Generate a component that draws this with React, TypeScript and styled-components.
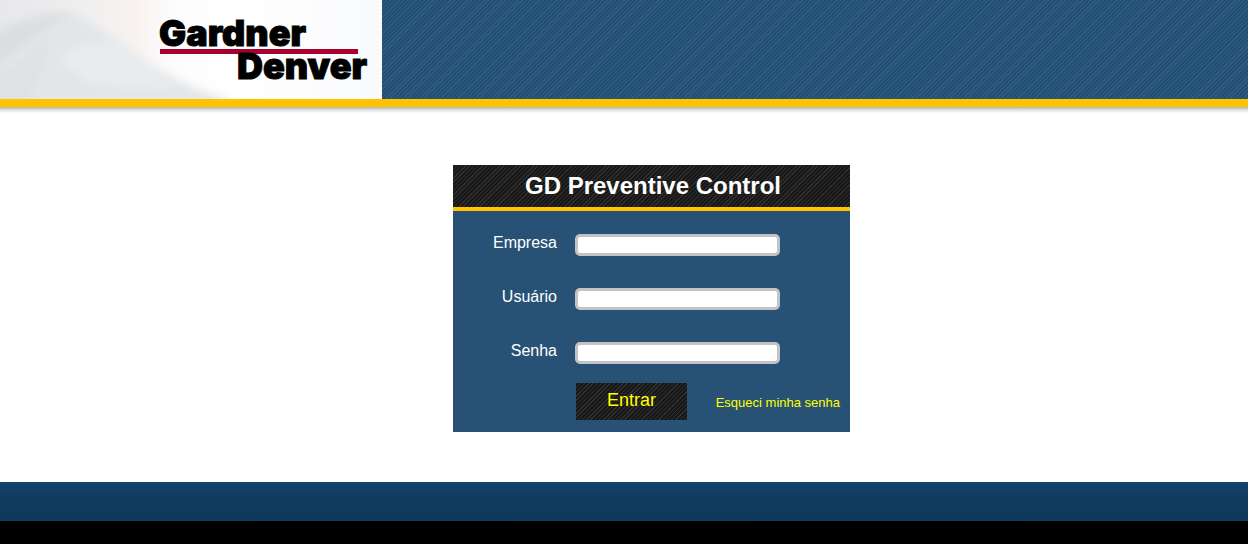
import React from "react";
import styled, { createGlobalStyle, css } from "styled-components";

const GlobalStyle = createGlobalStyle`
  *, *::before, *::after { box-sizing: border-box; }
  body {
    margin: 0;
    background: #000;
    font-family: "Liberation Sans", Arial, sans-serif;
  }
`;

const hatch = (base: string, line: string) => css`
  background-color: ${base};
  background-image: repeating-linear-gradient(
    135deg,
    ${line} 0,
    ${line} 1px,
    transparent 1px,
    transparent 3px
  );
`;

const Page = styled.div`
  display: flex;
  flex-direction: column;
  min-height: 100vh;
  background: #fff;
`;

const Header = styled.header`
  position: relative;
  display: flex;
  border-bottom: 8px solid #ffc300;
  ${hatch("#225074", "#325d80")}
  background-clip: padding-box;

  &::after {
    content: "";
    position: absolute;
    top: calc(100% + 8px);
    left: 0;
    right: 0;
    height: 6px;
    background: linear-gradient(#b4b4b4, #e2e2e2 50%, #fff);
  }
`;

const Brand = styled.a`
  display: block;
  flex: none;
  height: 99px;
`;

const Main = styled.main`
  flex: 1;
  display: flex;
  justify-content: center;
  align-items: flex-start;
  padding: 58px 0 50px 55px;
`;

const Panel = styled.form`
  width: 397px;
  background: #275275;
`;

const Title = styled.h1`
  margin: 0;
  padding-left: 3px;
  border-bottom: 4px solid #ffc300;
  ${hatch("#181818", "#2e2e2e")}
  background-clip: padding-box;
  color: #fff;
  font-size: 24px;
  line-height: 42px;
  text-align: center;
`;

const Fields = styled.div`
  display: grid;
  gap: 32px;
  padding-top: 23px;
`;

const Field = styled.div`
  display: grid;
  grid-template-columns: 104px 205px;
  column-gap: 18px;
`;

const Label = styled.label`
  color: #fff;
  font-size: 16px;
  line-height: 18px;
  text-align: right;
`;

const TextInput = styled.input`
  width: 100%;
  height: 22px;
  padding: 0 4px;
  border: 3px solid #c3c3c3;
  border-radius: 5px;
  outline: none;
  background: #fff;
  font: 13px "Liberation Sans", Arial, sans-serif;
`;

const Actions = styled.div`
  display: flex;
  align-items: center;
  justify-content: space-between;
  padding: 19px 10px 12px 123px;
`;

const Submit = styled.button`
  width: 111px;
  height: 37px;
  padding: 0 0 3px;
  border: 0;
  ${hatch("#181818", "#303030")}
  color: #ffff00;
  font: 18px "Liberation Sans", Arial, sans-serif;
  cursor: pointer;
`;

const Forgot = styled.a`
  padding-top: 2px;
  color: #ffff00;
  font-size: 13px;
  text-decoration: none;
`;

const Footer = styled.footer`
  height: 62px;
  border-bottom: 23px solid #000;
  background: linear-gradient(#12416a, #103b5f 50%, #10395b);
`;

const LogoText = styled.text`
  font: 900 36px Inter, "Liberation Sans", sans-serif;
  fill: #000;
  stroke: #000;
  stroke-width: 1px;
`;

const Logo = () => (
  <svg width="382" height="99" viewBox="0 0 382 99" role="img" aria-label="Gardner Denver" display="block">
    <defs>
      <linearGradient id="backdrop" x1="0" x2="1" y1="0" y2="0">
        <stop offset="0" stopColor="#e8e8ea" />
        <stop offset="0.2" stopColor="#efeeef" />
        <stop offset="0.36" stopColor="#f8f3f0" />
        <stop offset="0.45" stopColor="#fcfcfd" />
        <stop offset="0.6" stopColor="#ffffff" />
        <stop offset="1" stopColor="#f9fafc" />
      </linearGradient>
      <filter id="soft" x="-20%" y="-20%" width="140%" height="140%">
        <feGaussianBlur stdDeviation="5" />
      </filter>
    </defs>
    <rect width="382" height="99" fill="url(#backdrop)" />
    <g filter="url(#soft)">
      <path d="M-20 38 Q30 2 75 14 Q105 30 130 50 Q170 82 240 104 L-20 125Z" fill="#e3e6e9" />
      <path d="M-20 45 Q15 15 75 14 Q40 28 -20 80Z" fill="#dcdddf" />
      <path d="M-20 90 Q20 60 50 38 Q45 70 20 115Z" fill="#dfe1e3" />
      <path d="M60 60 Q95 30 130 52 Q165 80 180 90 L90 84Z" fill="#e9ecef" />
    </g>
    <rect x="160" y="49" width="198" height="5" fill="#a8002e" />
    <LogoText x="159" y="46">Gardner</LogoText>
    <LogoText x="237" y="79">Denver</LogoText>
  </svg>
);

const fields = [
  { id: "empresa", label: "Empresa", type: "text" },
  { id: "usuario", label: "Usuário", type: "text" },
  { id: "senha", label: "Senha", type: "password" },
];

export default function App() {
  return (
    <>
      <GlobalStyle />
      <Page>
        <Header>
          <Brand href="#">
            <Logo />
          </Brand>
        </Header>
        <Main>
          <Panel onSubmit={(e) => e.preventDefault()}>
            <Title>GD Preventive Control</Title>
            <Fields>
              {fields.map((f) => (
                <Field key={f.id}>
                  <Label htmlFor={f.id}>{f.label}</Label>
                  <TextInput id={f.id} name={f.id} type={f.type} />
                </Field>
              ))}
            </Fields>
            <Actions>
              <Submit type="submit">Entrar</Submit>
              <Forgot href="#">Esqueci minha senha</Forgot>
            </Actions>
          </Panel>
        </Main>
        <Footer />
      </Page>
    </>
  );
}
